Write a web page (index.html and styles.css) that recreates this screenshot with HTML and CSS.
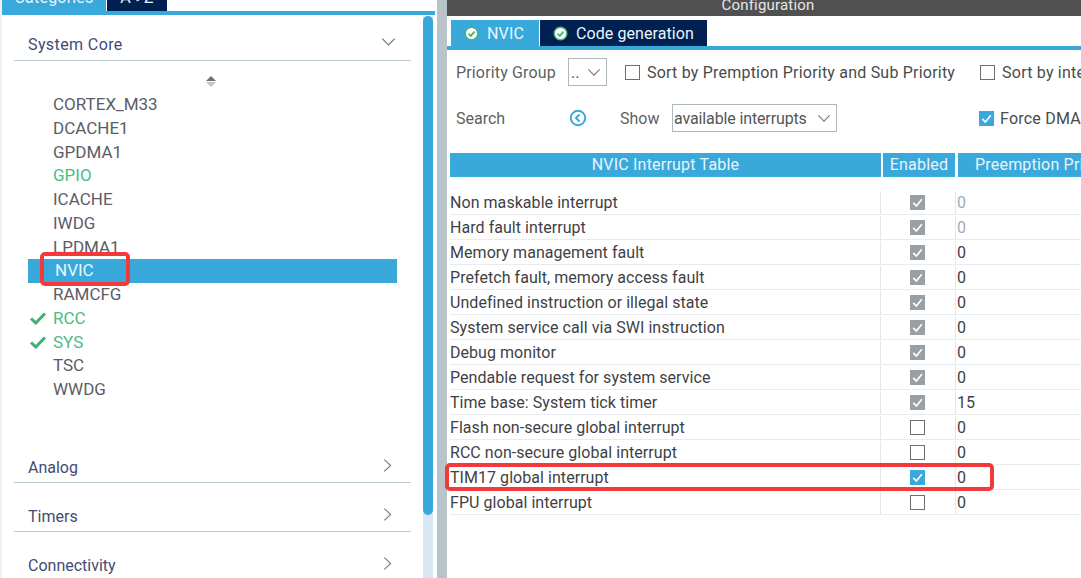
FILE: index.html
```html
<!DOCTYPE html>
<html lang="en">
<head>
<meta charset="utf-8">
<title>Configuration</title>
<link rel="stylesheet" href="styles.css">
</head>
<body>
<svg class="defs" width="0" height="0" aria-hidden="true">
  <symbol id="tick" viewBox="0 0 16 16"><path d="M3.5 8.5 6.8 11.8 12.6 4.6" fill="none" stroke="currentColor" stroke-width="1.8"/></symbol>
  <symbol id="bigtick" viewBox="0 0 16 14"><path d="M1 7.500 5.800 12 15 2.500" fill="none" stroke="currentColor" stroke-width="3"/></symbol>
  <symbol id="down" viewBox="0 0 16 10"><path d="M1.5 1.5 8 8 14.500 1.500" fill="none" stroke="currentColor" stroke-width="1.3"/></symbol>
  <symbol id="right" viewBox="0 0 10 16"><path d="M1.500 1.500 8.500 8 1.500 14.500" fill="none" stroke="currentColor" stroke-width="1.3"/></symbol>
  <symbol id="ok" viewBox="0 0 16 16"><circle cx="8" cy="8" r="6.700" fill="#fff" stroke="#4cb07a" stroke-width="1.600"/><path d="M4.800 8.200 7.200 10.500 11.300 5.900" fill="none" stroke="#4cb07a" stroke-width="2"/></symbol>
</svg>
<div class="app">
  <aside class="left">
    <div class="tabs-clip">
      <div class="tab tab-on">Categories</div>
      <div class="tab tab-off">A-&gt;Z</div>
    </div>
    <div class="left-body">
      <nav class="tree">
        <div class="sec sec-first"><span>System Core</span><svg class="chev-d"><use href="#down"/></svg></div>
        <div class="sorter"><i class="up"></i><i class="dn"></i></div>
        <ul class="items">
          <li>CORTEX_M33</li>
          <li>DCACHE1</li>
          <li>GPDMA1</li>
          <li class="green">GPIO</li>
          <li>ICACHE</li>
          <li>IWDG</li>
          <li>LPDMA1</li>
          <li class="sel">NVIC</li>
          <li>RAMCFG</li>
          <li class="green"><svg class="chk"><use href="#bigtick"/></svg>RCC</li>
          <li class="green"><svg class="chk"><use href="#bigtick"/></svg>SYS</li>
          <li>TSC</li>
          <li>WWDG</li>
        </ul>
        <div class="sec sec-gap"><span>Analog</span><svg class="chev-r"><use href="#right"/></svg></div>
        <div class="sec"><span>Timers</span><svg class="chev-r"><use href="#right"/></svg></div>
        <div class="sec"><span>Connectivity</span><svg class="chev-r"><use href="#right"/></svg></div>
      </nav>
      <div class="scroll"><div class="thumb"></div></div>
    </div>
  </aside>
  <div class="divider"></div>
  <main class="right">
    <header class="cfg">Configuration</header>
    <div class="rtabs">
      <div class="rtab rtab-on"><svg class="ok"><use href="#ok"/></svg>NVIC</div>
      <div class="rtab rtab-off"><svg class="ok"><use href="#ok"/></svg>Code generation</div>
    </div>
    <div class="bar bar1">
      <span class="lbl lbl-pg">Priority Group</span>
      <span class="sel-box sel-small"><span>..</span><svg class="sel-chev"><use href="#down"/></svg></span>
      <span class="cb cb-sort1"></span><span class="opt opt-1">Sort by Premption Priority and Sub Priority</span>
      <span class="cb cb-sort2"></span><span class="opt">Sort by interrupts</span>
    </div>
    <div class="bar bar2">
      <span class="lbl lbl-search">Search</span>
      <svg class="back" viewBox="0 0 18 18"><circle cx="9" cy="9" r="7.200" fill="none" stroke="#39a9dc" stroke-width="2"/><path d="M10.500 5.500 7 9 10.500 12.500" fill="none" stroke="#39a9dc" stroke-width="2"/></svg>
      <span class="lbl lbl-show">Show</span>
      <span class="sel-box sel-wide"><span>available interrupts</span><svg class="sel-chev"><use href="#down"/></svg></span>
      <span class="cb cb-on cb-dma"><svg><use href="#tick"/></svg></span><span class="opt">Force DMA</span>
    </div>
    <div class="thead">
      <div>NVIC Interrupt Table</div>
      <div>Enabled</div>
      <div class="th-last">Preemption Priority</div>
    </div>
    <div class="tbody">
      <div class="row"><div>Non maskable interrupt</div><div class="c"><span class="cb cb-dis"><svg><use href="#tick"/></svg></span></div><div class="v dim">0</div></div>
      <div class="row"><div>Hard fault interrupt</div><div class="c"><span class="cb cb-dis"><svg><use href="#tick"/></svg></span></div><div class="v dim">0</div></div>
      <div class="row"><div>Memory management fault</div><div class="c"><span class="cb cb-dis"><svg><use href="#tick"/></svg></span></div><div class="v">0</div></div>
      <div class="row"><div>Prefetch fault, memory access fault</div><div class="c"><span class="cb cb-dis"><svg><use href="#tick"/></svg></span></div><div class="v">0</div></div>
      <div class="row"><div>Undefined instruction or illegal state</div><div class="c"><span class="cb cb-dis"><svg><use href="#tick"/></svg></span></div><div class="v">0</div></div>
      <div class="row"><div>System service call via SWI instruction</div><div class="c"><span class="cb cb-dis"><svg><use href="#tick"/></svg></span></div><div class="v">0</div></div>
      <div class="row"><div>Debug monitor</div><div class="c"><span class="cb cb-dis"><svg><use href="#tick"/></svg></span></div><div class="v">0</div></div>
      <div class="row"><div>Pendable request for system service</div><div class="c"><span class="cb cb-dis"><svg><use href="#tick"/></svg></span></div><div class="v">0</div></div>
      <div class="row"><div>Time base: System tick timer</div><div class="c"><span class="cb cb-dis"><svg><use href="#tick"/></svg></span></div><div class="v">15</div></div>
      <div class="row"><div>Flash non-secure global interrupt</div><div class="c"><span class="cb"></span></div><div class="v">0</div></div>
      <div class="row"><div>RCC non-secure global interrupt</div><div class="c"><span class="cb"></span></div><div class="v">0</div></div>
      <div class="row"><div>TIM17 global interrupt</div><div class="c"><span class="cb cb-on"><svg><use href="#tick"/></svg></span></div><div class="v">0</div></div>
      <div class="row"><div>FPU global interrupt</div><div class="c"><span class="cb"></span></div><div class="v">0</div></div>
    </div>
  </main>
  <div class="mark mark-nvic"></div>
  <div class="mark mark-tim"></div>
</div>
</body>
</html>
```
FILE: styles.css
```css
* { box-sizing: border-box; }
html, body { margin: 0; height: 100%; overflow: hidden; background: #fff; }
body { font-family: Roboto, "Liberation Sans", sans-serif; font-size: 16px; color: #444; }
.defs { position: absolute; }
.app { position: relative; display: flex; width: 1081px; height: 578px; overflow: hidden; }

.left { width: 437px; flex: none; display: flex; flex-direction: column; border-left: 2px solid #eef0f1; }
.tabs-clip { height: 11px; display: flex; gap: 1px; align-items: flex-end; overflow: hidden; flex: none; }
.tab { height: 24px; line-height: 22px; text-align: center; color: #e8f4fb; font-size: 16px; flex: none; letter-spacing: .2px; }
.tab-on { width: 104px; background: #39a9dc; }
.tab-off { width: 60px; background: #002052; }
.left-body { flex: 1; display: flex; min-height: 0; border-top: 4px solid #39a9dc; margin-right: 2px; }
.tree { width: 409px; margin-left: 12px; flex: none; }
.sec { height: 49px; width: 397px; display: flex; justify-content: space-between; align-items: flex-end; padding: 0 15px 3px 14px; border-bottom: 1.500px solid #bcc8d0; color: #3f4c74; font-size: 16px; line-height: 22px; }
.sec-first { height: 46px; padding-bottom: 4px; letter-spacing: .4px; }
.sec-gap { margin-top: 32px; }
.chev-d { width: 15px; height: 10px; color: #7c7c7c; margin: 0 0 9px; }
.chev-r { width: 9px; height: 15px; color: #7c7c7c; margin: 0 4px 6px 0; }
.sorter { height: 32px; padding-top: 15px; display: flex; flex-direction: column; align-items: center; gap: 1px; width: 394px; }
.sorter i { display: block; width: 0; height: 0; border-left: 5px solid transparent; border-right: 5px solid transparent; }
.up { border-bottom: 5px solid #6f6f6f; }
.dn { border-top: 5px solid #c4c4c4; }
.items { list-style: none; margin: 0 0 0 14px; padding: 0; width: 369px; }
.items li { height: 23.750px; line-height: 23.750px; padding-left: 25px; color: #5c5c66; font-size: 17px; position: relative; white-space: nowrap; }
.items .green { color: #4cbb84; }
.items .sel { background: #39a9dc; color: #eaf6fc; padding-left: 27px; }
.chk { position: absolute; left: 2px; top: 4px; width: 16px; height: 14px; color: #3fae74; }
.scroll { width: 10px; flex: none; background: #d8e7f4; margin-top: 1px; }
.thumb { height: 499px; background: #39a9dc; border-radius: 5px; }

.divider { width: 10px; flex: none; background: #b8c4ca; }
.right { flex: 1; min-width: 0; overflow: hidden; white-space: nowrap; }
.cfg { height: 16px; background: #505050; color: #e6e6e6; text-align: center; line-height: 11px; font-size: 15px; overflow: hidden; padding-left: 8px; letter-spacing: .2px; }
.rtabs { margin-top: 4px; height: 30px; display: flex; gap: 1px; padding-left: 4px; border-bottom: 4px solid #39a9dc; }
.rtab { display: flex; align-items: center; color: #eaf6fc; letter-spacing: .2px; }
.rtab-on { width: 88px; background: #39a9dc; padding-left: 13px; }
.rtab-off { width: 167px; background: #002052; padding-left: 13px; letter-spacing: .08px; }
.ok { width: 15px; height: 15px; margin-right: 8px; flex: none; }

.bar { display: flex; align-items: center; height: 28px; color: #555; }
.bar1 { margin-top: 8px; }
.bar2 { margin-top: 18px; }
.lbl { color: #5f5f5f; }
.lbl-pg { margin-left: 9px; width: 112px; flex: none; letter-spacing: .15px; }
.lbl-search { margin-left: 9px; width: 113px; flex: none; }
.lbl-show { margin-left: 35px; width: 52px; flex: none; }
.back { width: 18px; height: 18px; flex: none; margin-right: -2px; }
.sel-box { height: 28px; border: 1.500px solid #adb8be; display: flex; align-items: center; justify-content: space-between; color: #555; flex: none; }
.sel-small { width: 39px; padding: 0 5px 0 2px; }
.sel-wide { width: 165px; padding: 0 5px 0 1px; height: 28px; letter-spacing: -.13px; }
.sel-chev { width: 14px; height: 9px; color: #777; }
.opt { color: #4a4a4a; flex: none; letter-spacing: .21px; }
.opt-1 { margin-right: 25px; }
.cb { display: inline-block; width: 15px; height: 15px; border: 1.500px solid #6f6f6f; background: #fff; flex: none; margin-right: 7px; }
.cb svg { display: block; width: 100%; height: 100%; color: #fff; }
.cb-sort1 { margin-left: 18px; }
.cb-dma { margin-left: 142px; margin-right: 6px; }
.cb-on { background: #39a9dc; border: 0; }
.cb-dis { background: #9a9fa4; border: 0; }

.thead { margin: 21px 0 0 3px; display: grid; grid-template-columns: 431px 72px 1fr; column-gap: 2px; height: 24px; }
.thead div { background: #39a9dc; color: #e8f4fb; text-align: center; line-height: 24px; letter-spacing: .2px; }
.thead .th-last { text-align: left; padding-left: 17px; margin-left: 1px; }
.tbody { margin-top: 13px; padding-left: 3px; }
.row { display: grid; grid-template-columns: 430px 76px 1fr; height: 25px; border-bottom: 1.500px solid #e8ebef; align-items: center; color: #3f3f46; line-height: 23px; padding-top: 1px; letter-spacing: .05px; }
.row > div { height: 100%; }
.c { border-left: 1px solid #e3e6ea; border-right: 1px solid #e3e6ea; display: flex; align-items: center; justify-content: center; padding-right: 2px; }
.c .cb { margin: 0; }
.v { padding-left: 1px; }
.dim { color: #a3abb8; }

.mark { position: absolute; border: 4px solid #f23a3c; border-radius: 5px; }
.mark-nvic { left: 40px; top: 252px; width: 90px; height: 34px; }
.mark-tim { left: 445px; top: 463px; width: 549px; height: 28px; }
```
